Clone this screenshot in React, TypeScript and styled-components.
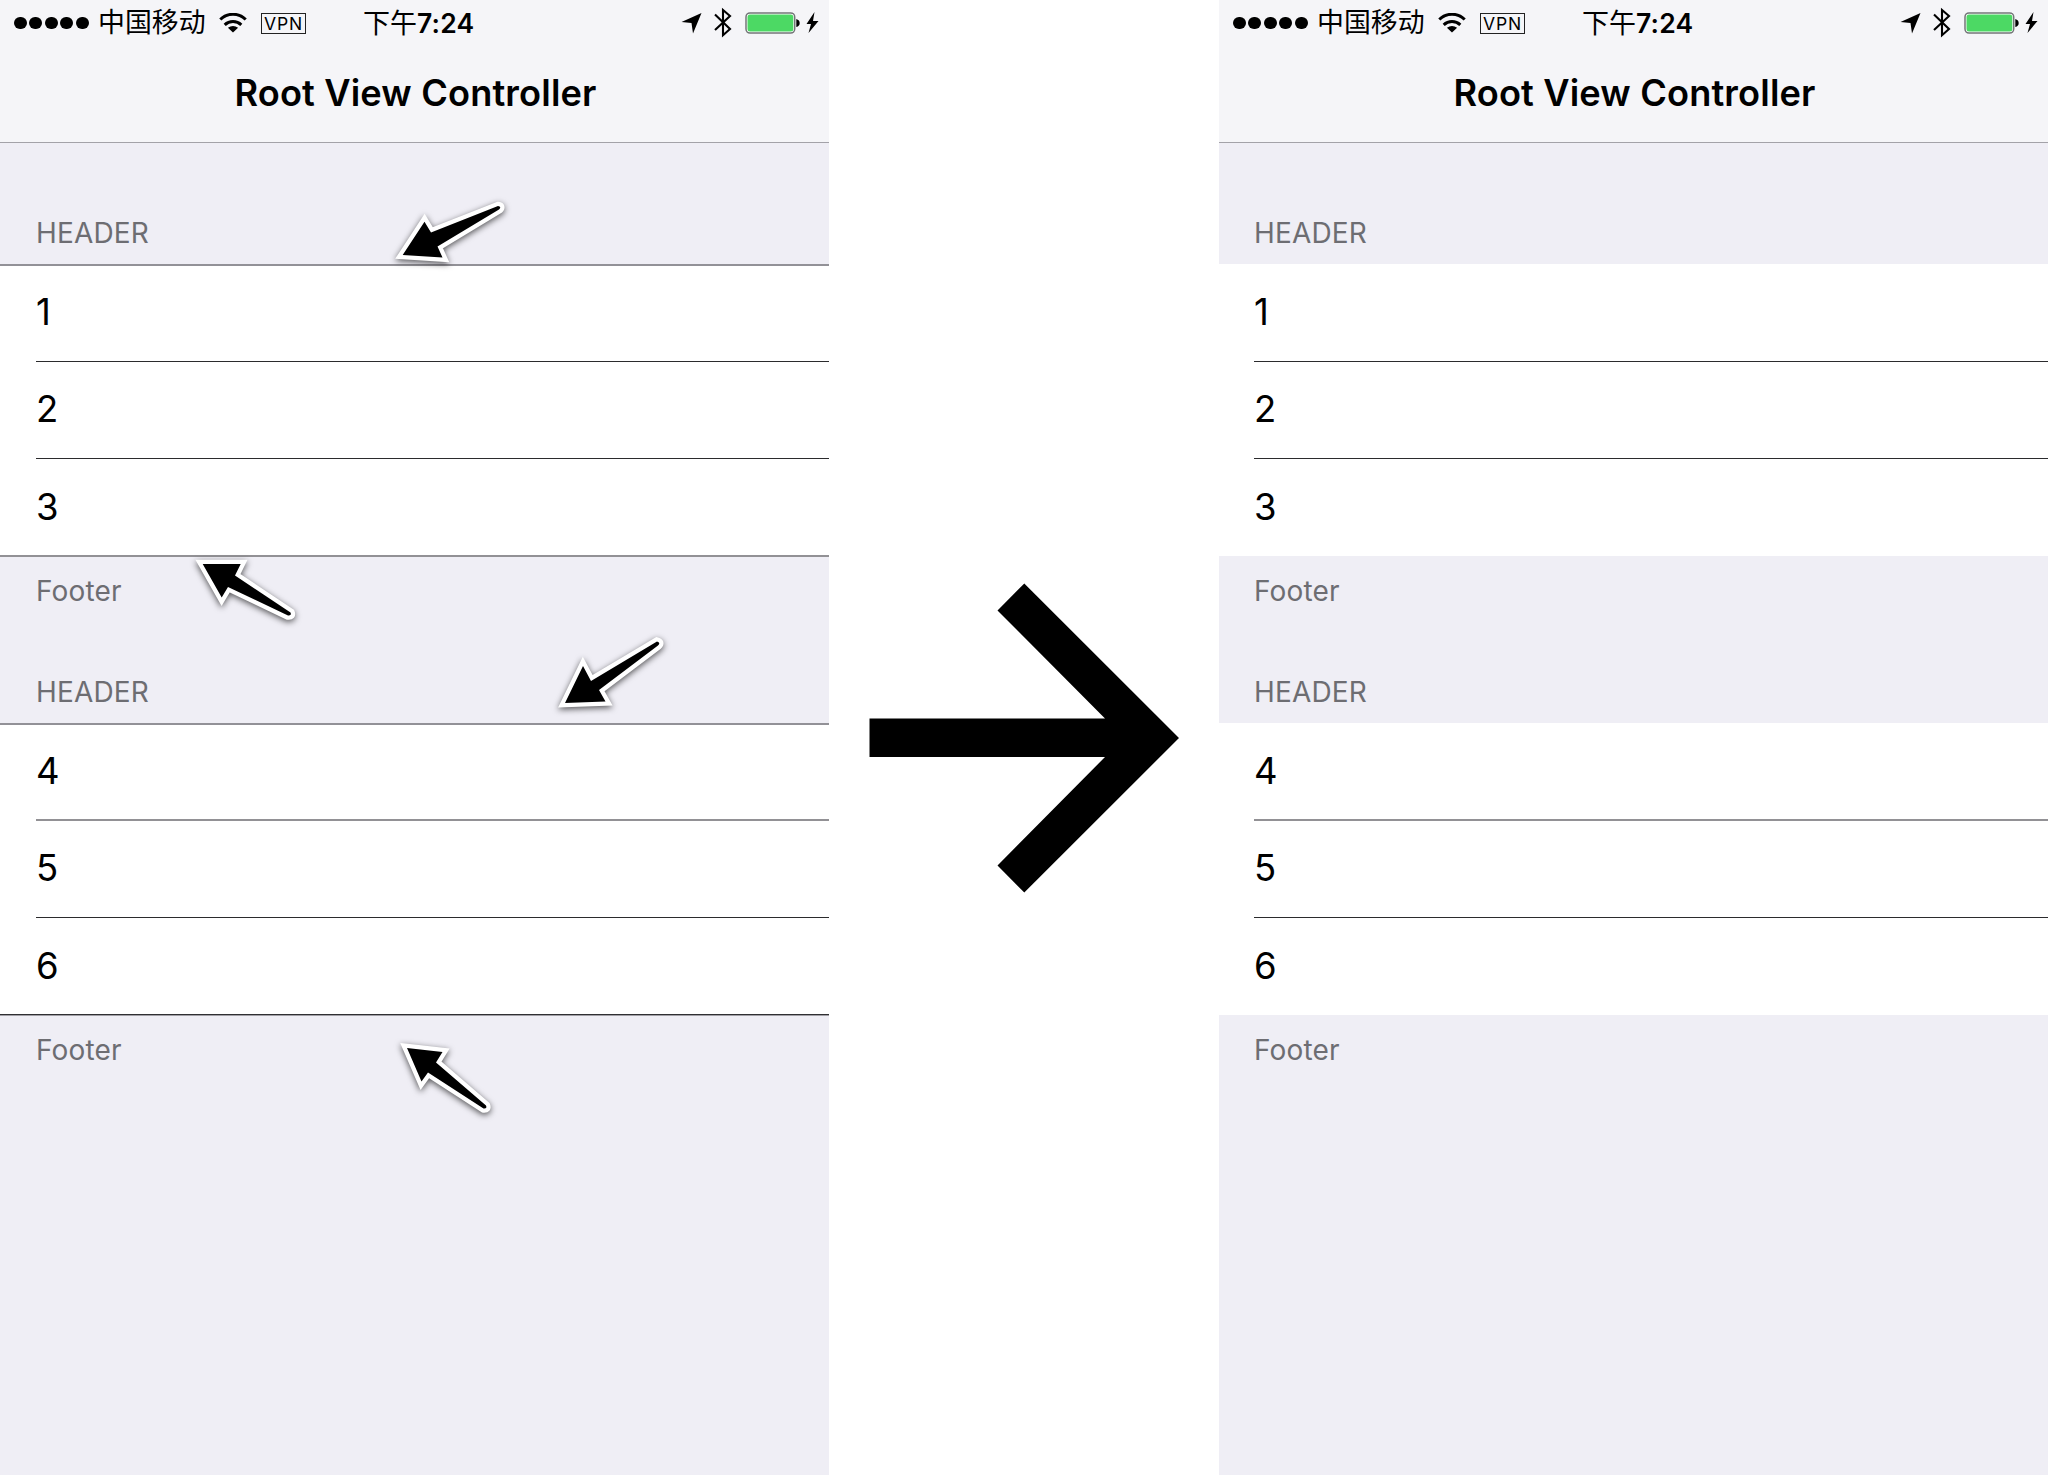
import React from 'react';
import styled, { createGlobalStyle } from 'styled-components';

const Global = createGlobalStyle`
  body { margin: 0; background: #fff; }
  * { box-sizing: border-box; }
`;
const Board = styled.main`
  position: relative;
  display: grid;
  grid-template-columns: 829px 390px 829px;
  width: 2048px;
  height: 1475px;
  overflow: hidden;
  background: #fff;
  color: #000;
  font-family: Inter, 'Noto Sans CJK SC', sans-serif;
`;
const Phone = styled.section`
  display: flex;
  flex-direction: column;
  background: #efeef5;
`;
const Bar = styled.header`
  height: 143px;
  background: #f5f5f8;
  border-bottom: 1px solid #a3a2a8;
`;
const Status = styled.div`
  display: grid;
  grid-template-columns: 363px 1fr auto;
  height: 46px;
  padding: 0 10px 0 0;
`;
const Group = styled.div`
  display: flex;
  align-items: center;
`;
const Dots = styled.div`
  display: flex;
  gap: 2.9px;
  margin-left: 14px;
`;
const Dot = styled.i`
  width: 12.6px;
  height: 12.6px;
  border-radius: 50%;
  background: #000;
`;
const Carrier = styled.span`
  margin-left: 9.5px;
  width: 108px;
  height: 46px;
  font: 400 26.9px/42px 'Noto Sans CJK SC', sans-serif;
  white-space: nowrap;
`;
const Wifi = styled.svg`
  margin-left: 12.5px;
`;
const Vpn = styled.span`
  width: 45px;
  height: 21px;
  margin-left: 14px;
  border: 1.3px solid #222;
  font-size: 17.5px;
  line-height: 19px;
  text-align: center;
  letter-spacing: 0.9px;
  text-indent: 1px;
`;
const Time = styled.span`
  font-size: 26.5px;
  line-height: 43px;
  font-weight: 600;
  letter-spacing: 0.2px;
  white-space: nowrap;
`;
const Meridiem = styled.span`
  font: 400 27px/43px 'Noto Sans CJK SC', sans-serif;
  letter-spacing: 0;
`;
const Title = styled.h1`
  margin: 0;
  height: 96px;
  padding-left: 2px;
  text-align: center;
  font-size: 36.2px;
  line-height: 95px;
  font-weight: 600;
  letter-spacing: 0.15px;
`;
const Caption = styled.div<{ $height: number; $top: number; $inset: number }>`
  height: ${p => p.$height}px;
  padding: ${p => p.$top}px 0 0 ${p => p.$inset}px;
  color: #6d6d72;
  font-size: 28px;
  line-height: 34px;
  letter-spacing: 0.15px;
`;
const Table = styled.div<{ $lined: boolean; $last?: boolean }>`
  height: ${p => (p.$lined && !p.$last ? 293 : 292)}px;
  margin-bottom: ${p => (p.$lined && !p.$last ? 0 : 1)}px;
  display: grid;
  grid-template-rows: ${p => (p.$last ? '96px 97px' : '96px 97px')} 1fr;
  background: #fff;
  border-top: 2px solid ${p => (p.$lined ? '#929197' : '#fff')};
  border-bottom: ${p => (p.$lined ? (p.$last ? '1px solid #302f33' : '2px solid #929195') : '0')};
  box-shadow: ${p => (p.$lined && p.$last ? '0 1px #a09fa5' : 'none')};
`;
const Row = styled.div<{ $inset: number; $soft: boolean }>`
  margin-left: ${p => p.$inset}px;
  font-size: 36.5px;
  line-height: 92px;
  &:not(:last-child) {
    border-bottom: ${p => (p.$soft ? '2px solid #929195' : '1px solid #2b2b2d')};
  }
  &:nth-child(2) { padding-top: 1px; }
  &:nth-child(3) { padding-top: 2px; }
`;
const Middle = styled.div`
  display: flex;
  align-items: center;
  justify-content: center;
`;
const Marks = styled.svg`
  position: absolute;
  left: 0;
  top: 0;
  pointer-events: none;
  filter: drop-shadow(0 2px 3px rgba(0, 0, 0, 0.65));
`;

const pointers = [
  'M402.7 255 L424.5 221.7 L431 232.5 L498 206 Q502 206.5 499 209.5 L437.5 246.5 L442.5 257.5 Z',
  'M202.7 564 L240.7 564 L235 575.5 L290.5 612.5 Q292 616 288 615.5 L228 587 L221.7 597.5 Z',
  'M565 703 L583 666 L591 681 L657 641.5 Q661 642.5 658 645.5 L599 690 L605.5 701.5 Z',
  'M407 1048 L442.5 1052 L436 1062.5 L486 1105.5 Q487.5 1109 483.5 1108.5 L428 1072.5 L421.5 1081.5 Z',
];

function StatusBar() {
  return (
    <Status>
      <Group>
        <Dots>{[0, 1, 2, 3, 4].map(n => <Dot key={n} />)}</Dots>
        <Carrier>中国移动</Carrier>
        <Wifi width="28" height="21" viewBox="0 0 28 21" fill="none" stroke="#000" strokeWidth="3">
          <path d="M1.3 6.5 A18 18 0 0 1 26.7 6.5 M5.7 11.8 A12 12 0 0 1 22.3 11.8" />
          <path d="M14 19.5 L8.9 14.8 Q14 11 19.1 14.8 Z" fill="#000" stroke="none" />
        </Wifi>
        <Vpn>VPN</Vpn>
      </Group>
      <Time><Meridiem>下午</Meridiem>7:24</Time>
      <svg width="140" height="46" viewBox="0 0 140 46">
        <path d="M2.5 22 L22.5 13 L14 33.5 L12.5 23 Z" />
        <path d="M36 14.5 L51 29 L44 35.2 L44 10 L51 16 L36 30" fill="none" stroke="#000" strokeWidth="2.1" />
        <rect x="67" y="12.9" width="48.7" height="20.2" rx="4" fill="#fff" stroke="#737577" strokeWidth="1.5" />
        <rect x="68.5" y="14.4" width="45.8" height="17.2" rx="2.5" fill="#4cd964" />
        <path d="M117.3 19 Q120.7 20 120.7 23 Q120.7 26 117.3 27 Z" />
        <path d="M135.5 12 L127.5 24 L132 24 L129.5 33 L139.5 21 L134 21 Z" />
      </svg>
    </Status>
  );
}

function Screen({ lined = false }: { lined?: boolean }) {
  const inset = lined ? 36 : 35;
  return (
    <Phone>
      <Bar>
        <StatusBar />
        <Title>Root View Controller</Title>
      </Bar>
      <Caption $height={121} $top={73} $inset={inset}>HEADER</Caption>
      <Table $lined={lined}>
        {[1, 2, 3].map(n => <Row key={n} $inset={inset} $soft={false}>{n}</Row>)}
      </Table>
      <Caption $height={67} $top={17} $inset={inset}>Footer</Caption>
      <Caption $height={99} $top={51} $inset={inset}>HEADER</Caption>
      <Table $lined={lined} $last>
        {[4, 5, 6].map(n => <Row key={n} $inset={inset} $soft={n === 4}>{n}</Row>)}
      </Table>
      <Caption $height={67} $top={17} $inset={inset}>Footer</Caption>
    </Phone>
  );
}

export default function App() {
  return (
    <>
      <Global />
      <Board>
        <Screen lined />
        <Middle>
          <svg width="310" height="310" viewBox="0 0 310 310">
            <path d="M.5 135.5 H236 L128.5 27.5 L155.3 .5 L310 155 L155.3 309.5 L128.5 282.5 L236 174 H.5 Z" />
          </svg>
        </Middle>
        <Screen />
        <Marks width="829" height="1475" viewBox="0 0 829 1475">
          {pointers.map(d => (
            <path key={d} d={d} fill="#000" stroke="#fff" strokeWidth="8.5" paintOrder="stroke" />
          ))}
        </Marks>
      </Board>
    </>
  );
}
